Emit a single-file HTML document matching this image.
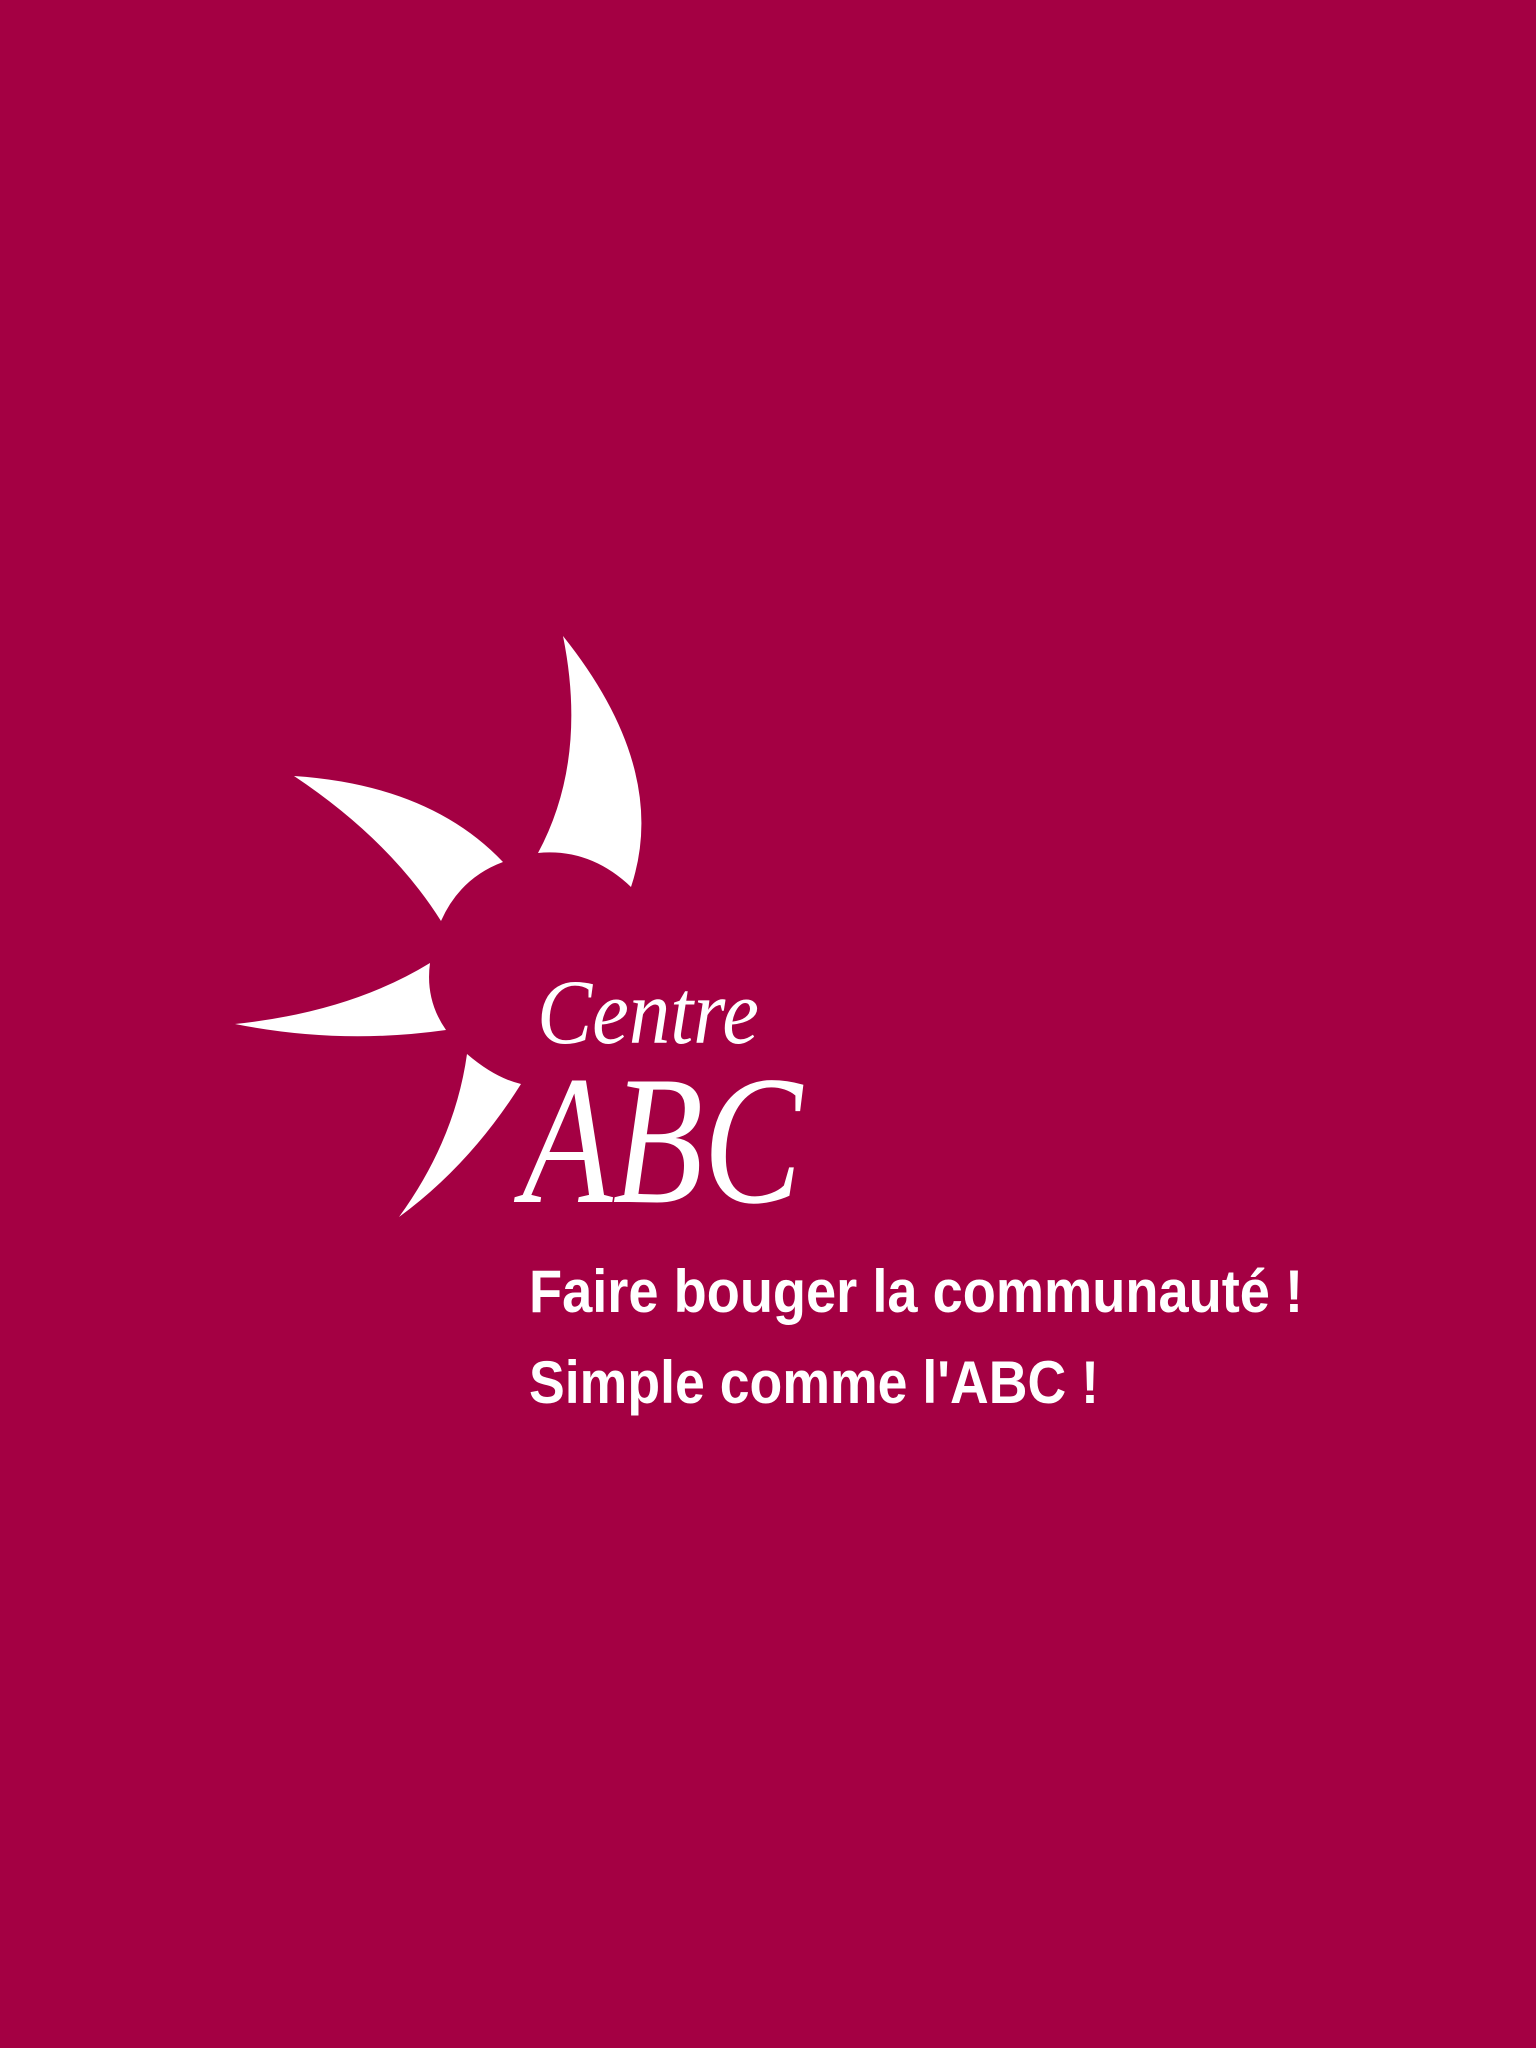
<!DOCTYPE html>
<html><head><meta charset="utf-8"><style>
html,body{margin:0;padding:0;background:#a40043;}
svg{display:block}
</style></head><body>
<svg width="1536" height="2048" viewBox="0 0 1536 2048" xmlns="http://www.w3.org/2000/svg">
<rect width="1536" height="2048" fill="#a40043"/>
<g fill="#fff">
<path d="M563,636 Q588,760 538,853 Q590,848 631,887 Q670,770 563,636Z"/>
<path d="M294,776 Q430,785 503,862 Q460,878 441,921 Q390,840 294,776Z"/>
<path d="M235,1024 Q350,1012 430,963 Q425,1000 446,1030 Q340,1045 235,1024Z"/>
<path d="M467,1054 Q495,1078 521,1084 Q470,1165 399,1217 Q455,1140 467,1054Z"/>
<text x="537" y="1043" font-family="'Liberation Serif',serif" font-style="italic" font-size="92" textLength="222" lengthAdjust="spacingAndGlyphs">Centre</text>
<text x="522" y="1202" font-family="'Liberation Serif',serif" font-style="italic" font-size="184" textLength="280" lengthAdjust="spacingAndGlyphs">ABC</text>
<g font-family="'Liberation Sans',sans-serif" font-size="60" font-weight="bold">
<text x="529" y="1312" textLength="774" lengthAdjust="spacingAndGlyphs">Faire bouger la communauté !</text>
<text x="529" y="1403" textLength="570" lengthAdjust="spacingAndGlyphs">Simple comme l'ABC !</text>
</g>
</g>
</svg>
</body></html>
